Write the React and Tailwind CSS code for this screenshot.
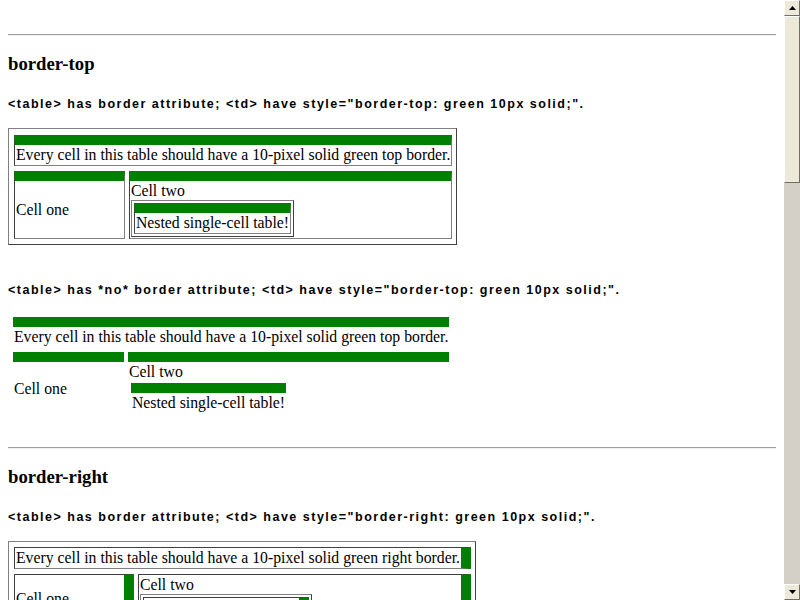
const serif = "font-['Liberation_Serif','Times_New_Roman',serif]";

function Rule() {
  return <div className="h-[2px] border-t border-t-[#a0a0a0] border-b border-b-[#eeeeee]" />;
}

function Heading({ children, className = "" }) {
  return (
    <h3 className={`${serif} text-[18.72px] leading-[22px] font-bold text-black ${className}`}>
      {children}
    </h3>
  );
}

function Code({ children, className = "" }) {
  return (
    <p
      className={`font-['Liberation_Sans',Arial,sans-serif] text-[12.5px] leading-[16px] font-bold tracking-[1.5px] text-black whitespace-pre ${className}`}
    >
      {children}
    </p>
  );
}

// bordered cell, green top
const topCell =
  "border border-solid border-t-[10px] border-t-[#008000] border-l-[#404040] border-r-[#808080] border-b-[#808080] p-px align-middle text-left whitespace-nowrap";
// plain cell, green top only
const topPlain = "border-t-[10px] border-solid border-t-[#008000] p-px align-middle text-left whitespace-nowrap";
// bordered cell, green right
const rightCell =
  "border border-solid border-r-[10px] border-r-[#008000] border-l-[#404040] border-t-[#404040] border-b-[#808080] p-px align-middle text-left whitespace-nowrap";
const outerTable =
  "border-separate border border-solid border-t-[#808080] border-l-[#808080] border-r-[#404040] border-b-[#404040]";

function BorderTopTable() {
  return (
    <table className={`${outerTable} border-spacing-x-[4px] border-spacing-y-[5px] pl-px pt-px`}>
      <tbody>
        <tr>
          <td colSpan={2} className={topCell}>
            Every cell in this table should have a 10-pixel solid green top border.
          </td>
        </tr>
        <tr>
          <td className={`${topCell} w-[111px]`}>Cell one</td>
          <td className={topCell}>
            <div>Cell two</div>
            <table className={`${outerTable} border-spacing-[2px]`}>
              <tbody>
                <tr>
                  <td className={topCell}>Nested single-cell table!</td>
                </tr>
              </tbody>
            </table>
          </td>
        </tr>
      </tbody>
    </table>
  );
}

function NoBorderTable() {
  return (
    <table className="border-separate border-spacing-x-[4px] border-spacing-y-[5px] ml-px">
      <tbody>
        <tr>
          <td colSpan={2} className={topPlain}>
            Every cell in this table should have a 10-pixel solid green top border.
          </td>
        </tr>
        <tr>
          <td className={`${topPlain} w-[111px]`}>Cell one</td>
          <td className={topPlain}>
            <div>Cell two</div>
            <table className="border-separate border-spacing-[2px]">
              <tbody>
                <tr>
                  <td className={`${topPlain} w-[154px]`}>Nested single-cell table!</td>
                </tr>
              </tbody>
            </table>
          </td>
        </tr>
      </tbody>
    </table>
  );
}

function BorderRightTable() {
  return (
    <table className={`${outerTable} border-spacing-x-[4px] border-spacing-y-[5px] pl-px`}>
      <tbody>
        <tr>
          <td colSpan={2} className={rightCell}>
            Every cell in this table should have a 10-pixel solid green right border.
          </td>
        </tr>
        <tr>
          <td className={`${rightCell} w-[120px]`}>Cell one</td>
          <td className={rightCell}>
            <div>Cell two</div>
            <table className={`${outerTable} border-spacing-[2px]`}>
              <tbody>
                <tr>
                  <td className={rightCell}>Nested single-cell table!</td>
                </tr>
              </tbody>
            </table>
          </td>
        </tr>
      </tbody>
    </table>
  );
}

function Arrow({ up }) {
  return (
    <svg width="7" height="4" viewBox="0 0 7 4">
      {up ? <path d="M3.5 0 L7 4 L0 4 Z" fill="#000" /> : <path d="M0 0 L7 0 L3.5 4 Z" fill="#000" />}
    </svg>
  );
}

function ScrollBar() {
  return (
    <div className="w-4 h-[600px] flex flex-col bg-[#d4d0c8] shrink-0">
      <div className="h-4 flex items-center justify-center bg-[#ece9d8] border border-t-white border-l-white border-r-[#716f64] border-b-[#716f64]">
        <Arrow up />
      </div>
      <div className="h-[167px] bg-[#ece9d8] border border-t-white border-l-white border-r-[#716f64] border-b-[#716f64]" />
      <div className="flex-1" />
      <div className="h-4 flex items-center justify-center bg-[#ece9d8] border border-t-white border-l-white border-r-[#716f64] border-b-[#716f64]">
        <Arrow />
      </div>
    </div>
  );
}

export default function App() {
  return (
    <div className="flex w-[800px] h-[600px] overflow-hidden bg-white">
      <div className={`flex-1 h-[600px] overflow-hidden px-2 pt-[34px] ${serif} text-[15.75px] leading-[18px] text-black`}>
        <Rule />
        <Heading className="mt-[17px]">border-top</Heading>
        <Code className="mt-[21px]">{'<table> has border attribute; <td> have style="border-top: green 10px solid;".'}</Code>
        <div className="mt-[16px]">
          <BorderTopTable />
        </div>
        <Code className="mt-[37px]">{'<table> has *no* border attribute; <td> have style="border-top: green 10px solid;".'}</Code>
        <div className="mt-[14px]">
          <NoBorderTable />
        </div>
        <div className="mt-[26px]">
          <Rule />
        </div>
        <Heading className="mt-[17px]">border-right</Heading>
        <Code className="mt-[21px]">{'<table> has border attribute; <td> have style="border-right: green 10px solid;".'}</Code>
        <div className="mt-[16px]">
          <BorderRightTable />
        </div>
      </div>
      <ScrollBar />
    </div>
  );
}
